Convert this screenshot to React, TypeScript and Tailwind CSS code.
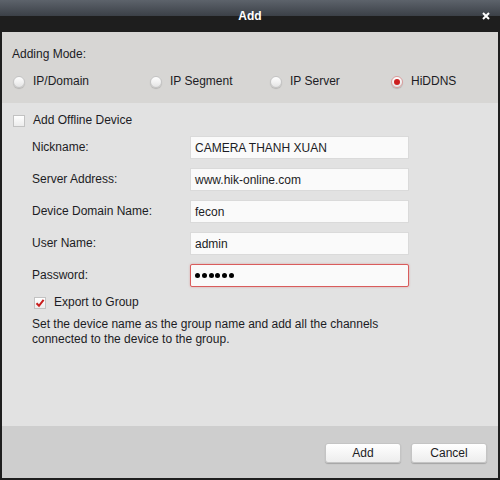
import React from "react";

const font = { fontFamily: '"Liberation Sans", Arial, sans-serif' };

function Radio({ label, checked, width }: { label: string; checked?: boolean; width: string }) {
  return (
    <div className={`flex items-center ${width}`}>
      <span
        className={
          "flex h-[12px] w-[12px] items-center justify-center rounded-full border bg-[linear-gradient(#ffffff,#e4e4e4)] shadow-[0_1px_1px_rgba(0,0,0,0.15)] " +
          (checked ? "border-[#d99a9a]" : "border-[#c4c4c4]")
        }
      >
        {checked && <span className="h-[6px] w-[6px] rounded-full bg-[#cc1f1f]" />}
      </span>
      <span className="ml-[8px] leading-[15px]">{label}</span>
    </div>
  );
}

function Checkbox({ checked }: { checked?: boolean }) {
  return (
    <span className="flex h-[12px] w-[12px] items-center justify-center border border-[#c2c2c2] bg-[linear-gradient(#ffffff,#ececec)]">
      {checked && (
        <svg width="10" height="10" viewBox="0 0 10 10">
          <path d="M1.5 5.2 L4 7.8 L8.6 1.8" fill="none" stroke="#c81e1e" strokeWidth="2" />
        </svg>
      )}
    </span>
  );
}

function Field({ label, children, error }: { label: string; children: React.ReactNode; error?: boolean }) {
  return (
    <div className="flex h-[23px] items-center">
      <span className="w-[158px] leading-[15px]">{label}</span>
      <div
        className={
          "flex h-[23px] w-[219px] items-center px-[4px] bg-[#fafafa] " +
          (error
            ? "rounded-[2px] border-[1.5px] border-[#d95c5c] shadow-[0_0_2px_rgba(217,92,92,0.5)]"
            : "border border-[#dadada]")
        }
      >
        {children}
      </div>
    </div>
  );
}

export default function App() {
  return (
    <div className="flex h-[480px] w-[500px] flex-col bg-[#1e1e1e] text-[12px] text-[#1c1c24]" style={font}>
      <div className="relative flex h-[32px] items-center justify-center bg-[linear-gradient(#5d636b,#3b4047_50%,#1e1e1e_50%)]">
        <span className="text-[12px] font-bold text-white">Add</span>
        <svg className="absolute right-[10px] top-[12px]" width="8" height="8" viewBox="0 0 8 8">
          <path d="M1 1 L7 7 M7 1 L1 7" stroke="#ffffff" strokeWidth="2" />
        </svg>
      </div>
      <div className="mx-[2px] mb-[2px] flex flex-1 flex-col">
        <div className="h-[71px] bg-[#d7d6d4] pl-[10px] pt-[15px]">
          <div className="leading-[15px]">Adding Mode:</div>
          <div className="mt-[12px] flex pl-[1px]">
            <Radio label="IP/Domain" width="w-[137px]" />
            <Radio label="IP Segment" width="w-[120px]" />
            <Radio label="IP Server" width="w-[121px]" />
            <Radio label="HiDDNS" checked width="w-[90px]" />
          </div>
        </div>
        <div className="flex flex-1 flex-col bg-[#e2e2e2] pl-[11px] pt-[10px]">
          <div className="flex items-center">
            <Checkbox />
            <span className="ml-[8px] leading-[15px]">Add Offline Device</span>
          </div>
          <div className="mt-[8px] flex flex-col gap-[9px] pl-[19px]">
            <Field label="Nickname:">CAMERA THANH XUAN</Field>
            <Field label="Server Address:">www.hik-online.com</Field>
            <Field label="Device Domain Name:">fecon</Field>
            <Field label="User Name:">admin</Field>
            <Field label="Password:" error>
              <div className="flex gap-[1.8px]">
                {Array.from({ length: 6 }).map((_, i) => (
                  <span key={i} className="h-[5px] w-[5px] rounded-full bg-black" />
                ))}
              </div>
            </Field>
          </div>
          <div className="mt-[8px] flex items-center pl-[21px]">
            <Checkbox checked />
            <span className="ml-[8px] leading-[15px]">Export to Group</span>
          </div>
          <p className="mt-[7px] pl-[19px] leading-[15px]">
            Set the device name as the group name and add all the channels
            <br />
            connected to the device to the group.
          </p>
        </div>
        <div className="flex h-[52px] justify-end gap-[10px] bg-[#cecece] pr-[11px] pt-[17px]">
          <button className="h-[20px] w-[76px] rounded-[3px] border border-[#c4c4c4] bg-[linear-gradient(#ffffff,#ededed)] shadow-[0_1px_1px_rgba(0,0,0,0.2)]">
            Add
          </button>
          <button className="h-[20px] w-[76px] rounded-[3px] border border-[#c4c4c4] bg-[linear-gradient(#ffffff,#ededed)] shadow-[0_1px_1px_rgba(0,0,0,0.2)]">
            Cancel
          </button>
        </div>
      </div>
    </div>
  );
}
